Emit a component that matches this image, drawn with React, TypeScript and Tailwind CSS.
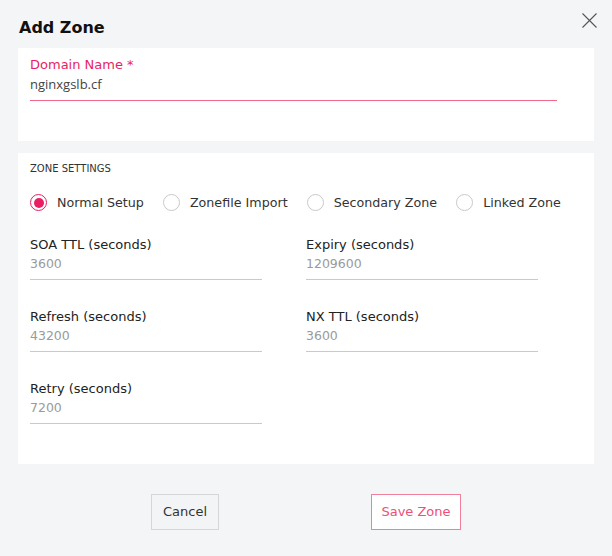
const font = { fontFamily: '"DejaVu Sans", sans-serif' };

type Field = { label: string; value: string };

const fields: Field[] = [
  { label: "SOA TTL (seconds)", value: "3600" },
  { label: "Expiry (seconds)", value: "1209600" },
  { label: "Refresh (seconds)", value: "43200" },
  { label: "NX TTL (seconds)", value: "3600" },
  { label: "Retry (seconds)", value: "7200" },
];

const setups = ["Normal Setup", "Zonefile Import", "Secondary Zone", "Linked Zone"];

const Radio = ({ checked, label }: { checked: boolean; label: string }) => {
  return (
    <label className="flex items-center gap-[10px] cursor-pointer">
      <span
        className={
          checked
            ? "flex h-[17px] w-[17px] items-center justify-center rounded-full border-[1.5px] border-[#e91e63] bg-white"
            : "flex h-[17px] w-[17px] items-center justify-center rounded-full border border-[#c9c9c9] bg-white"
        }
      >
        {checked && <span className="h-[10px] w-[10px] rounded-full bg-[#e91e63]" />}
      </span>
      <span className="text-[12.7px] leading-[17px] text-[#333]">{label}</span>
    </label>
  );
};

const App = () => {
  return (
    <div className="relative h-[556px] w-[612px] bg-[#f4f5f7]" style={font}>
      <div className="h-[48px] px-[19px] pt-[18px]">
        <h1 className="text-[16px] font-bold leading-[20px] text-[#111]">Add Zone</h1>
      </div>
      <button className="absolute left-[581px] top-[12px] h-[17px] w-[17px]" aria-label="Close">
        <svg viewBox="0 0 17 17" className="h-[17px] w-[17px]">
          <path d="M1.5 1.5 L15.5 15.5 M15.5 1.5 L1.5 15.5" stroke="#555" strokeWidth="1.1" />
        </svg>
      </button>

      <div className="mx-[18px] h-[93px] bg-white px-[12px] pt-[9px]">
        <div className="text-[13px] leading-[16px] text-[#e91e63]">Domain Name *</div>
        <div
          className="mt-[2px] w-[527px] border-b border-[#ee6a88] pb-[7px] text-[13px] leading-[18px] text-[#444]"
          style={{ fontFamily: '"Open Sans", sans-serif' }}
        >
          nginxgslb.cf
        </div>
      </div>

      <div className="mx-[18px] mt-[12px] h-[311px] bg-white px-[12px] pt-[10px]">
        <div className="text-[10px] leading-[12px] text-[#333]">ZONE SETTINGS</div>
        <div className="mt-[19px] flex items-center gap-[19px]">
          {setups.map((s, i) => (
            <Radio key={s} checked={i === 0} label={s} />
          ))}
        </div>
        <div className="mt-[26px] grid grid-cols-[232px_232px] gap-x-[44px] gap-y-[29px]">
          {fields.map((f) => (
            <div key={f.label}>
              <div className="text-[13px] leading-[16px] text-[#222]">{f.label}</div>
              <div className="mt-[3px] border-b border-[#cacaca] pb-[7px] text-[12.5px] leading-[16px] text-[#9a9a9a]">
                {f.value}
              </div>
            </div>
          ))}
        </div>
      </div>

      <div className="mt-[30px] flex items-center pl-[151px]">
        <button className="h-[36px] w-[68px] border border-[#d6d6d6] bg-[#f3f4f5] text-[13px] text-[#333]">
          Cancel
        </button>
        <button className="ml-[152px] h-[36px] w-[90px] border border-[#f0809c] bg-white text-[13px] text-[#ec5079]">
          Save Zone
        </button>
      </div>
    </div>
  );
};

export default App;
